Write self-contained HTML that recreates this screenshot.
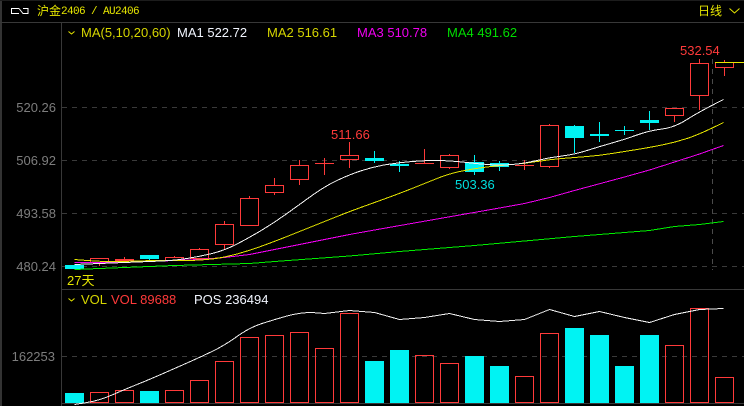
<!DOCTYPE html>
<html><head><meta charset="utf-8"><style>
html,body{margin:0;padding:0;background:#000;width:744px;height:406px;overflow:hidden}
svg{display:block;position:absolute;left:0;top:0}
text{font-family:"Liberation Sans","Noto Sans CJK SC",sans-serif;font-size:13px}
.c{font-family:"Liberation Mono","Noto Sans CJK SC",monospace;font-size:11px;letter-spacing:-0.6px;fill:#e6e600}
.a{fill:#7d7d7d}
</style></head><body>
<svg width="744" height="406" viewBox="0 0 744 406" xmlns="http://www.w3.org/2000/svg">
<rect width="744" height="406" fill="#000"/>
<g shape-rendering="crispEdges">
<rect x="0" y="0" width="2" height="406" fill="#333"/>
<rect x="0" y="0" width="744" height="1" fill="#1c1c1c"/>
<path d="M0 22.5H744M61.5 23V406M62 289.5H744M62 403.5H744" stroke="#383838" fill="none"/>
<path d="M62 107.5H744M62 160.5H744M62 213.5H744M62 266.5H744M62 356.5H744" stroke="#3a3a3a" stroke-dasharray="5 5" fill="none"/>
<path d="M712.5 59V270" stroke="#4a4a4a" stroke-dasharray="5 5" fill="none"/>
</g>

<g shape-rendering="crispEdges" fill="#00f3f3">
<rect x="65" y="393" width="19" height="10"/><rect x="140" y="391" width="19" height="12"/>
<rect x="365" y="361" width="19" height="42"/><rect x="390" y="350" width="19" height="53"/>
<rect x="465" y="356" width="19" height="47"/><rect x="490" y="366" width="19" height="37"/>
<rect x="565" y="328" width="19" height="75"/><rect x="590" y="335" width="19" height="68"/>
<rect x="615" y="366" width="19" height="37"/><rect x="640" y="335" width="19" height="68"/>
</g>
<g shape-rendering="crispEdges" fill="none" stroke="#ff3a3a">
<rect x="90.5" y="392.5" width="18" height="10"/>
<rect x="115.5" y="390.5" width="18" height="12"/>
<rect x="165.5" y="390.5" width="18" height="12"/>
<rect x="190.5" y="380.5" width="18" height="22"/>
<rect x="215.5" y="361.5" width="18" height="41"/>
<rect x="240.5" y="337.5" width="18" height="65"/>
<rect x="265.5" y="335.5" width="18" height="67"/>
<rect x="290.5" y="332.5" width="18" height="70"/>
<rect x="315.5" y="348.5" width="18" height="54"/>
<rect x="340.5" y="313.5" width="18" height="89"/>
<rect x="415.5" y="355.5" width="18" height="47"/>
<rect x="440.5" y="363.5" width="18" height="39"/>
<rect x="515.5" y="376.5" width="18" height="26"/>
<rect x="540.5" y="333.5" width="18" height="69"/>
<rect x="665.5" y="345.5" width="18" height="57"/>
<rect x="690.5" y="308.5" width="18" height="94"/>
<rect x="715.5" y="377.5" width="18" height="25"/>
</g>
<path shape-rendering="crispEdges" fill="none" stroke="#f0f0f0" d="M74.5 404.5L87 402.5Q99.5 400.5 112 395Q124.5 389.5 137 384.5Q149.5 379.5 162 374Q174.5 368.5 187 363Q199.5 357.5 212 351.5Q224.5 345.5 237 336.5Q249.5 327.5 262 323.5Q274.5 319.5 287 316Q299.5 312.5 312 312.5L324.5 313.5L349.5 310.5L374.5 312.5L399.5 319.5L424.5 317.5L449.5 313.5L474.5 319.5L499.5 321.5L524.5 319.5L549.5 309.5L574.5 316.5L599.5 311.5L624.5 317.5L649.5 322.5L674.5 314.5L699.5 309.5L723.5 308.5"/>

<g shape-rendering="crispEdges" fill="none" stroke="#ff3a3a">
<path d="M99.5 258V266M124.5 257V262M174.5 256V260M199.5 248V258M224.5 221V250M249.5 196V226M274.5 178V195M299.5 160V185M324.5 158V175M349.5 142V168M424.5 149V164M449.5 154V169M524.5 160V170M549.5 124V168M699.5 59V110M724.5 60V76"/>
<rect x="90.5" y="258.5" width="18" height="4" fill="#000"/>
<rect x="115.5" y="259.5" width="18" height="1" fill="#000"/>
<rect x="165.5" y="257.5" width="18" height="3" fill="#000"/>
<rect x="190.5" y="249.5" width="18" height="9" fill="#000"/>
<rect x="215.5" y="224.5" width="18" height="20" fill="#000"/>
<rect x="240.5" y="198.5" width="18" height="27" fill="#000"/>
<rect x="265.5" y="185.5" width="18" height="7" fill="#000"/>
<rect x="290.5" y="165.5" width="18" height="14" fill="#000"/>
<path d="M315 163.5H334M415 163.5H434M515 165.5H534"/>
<rect x="340.5" y="155.5" width="18" height="4" fill="#000"/>
<rect x="440.5" y="155.5" width="18" height="12" fill="#000"/>
<rect x="540.5" y="125.5" width="18" height="41" fill="#000"/>
<rect x="665.5" y="108.5" width="18" height="7" fill="#000"/>
<path d="M674.5 116V122"/>
<rect x="690.5" y="63.5" width="18" height="32" fill="#000"/>
<rect x="715.5" y="62.5" width="18" height="5" fill="#000"/>
</g>
<g shape-rendering="crispEdges">
<path d="M149.5 259V261M374.5 151V163M399.5 161V172M474.5 155V175M499.5 161V171M574.5 125V153M599.5 122V142M624.5 126V135M649.5 111V130" stroke="#00f3f3" fill="none"/>
<g fill="#00f3f3">
<rect x="65" y="265" width="19" height="4"/>
<rect x="140" y="255" width="19" height="4"/>
<rect x="365" y="158" width="19" height="3"/>
<rect x="390" y="164" width="19" height="2"/>
<rect x="465" y="162" width="19" height="10"/>
<rect x="490" y="163" width="19" height="4"/>
<rect x="565" y="126" width="19" height="12"/>
<rect x="590" y="134" width="19" height="2"/>
<rect x="615" y="130" width="19" height="1"/>
<rect x="640" y="120" width="19" height="3"/>
</g>
</g>

<g shape-rendering="crispEdges" fill="none">
<polyline stroke="#00ee00" points="74.5,269.5 124.5,267.5 174.5,265.5 249.5,263.5 274.5,261.5 349.5,256 399.5,251.5 474.5,245.5 574.5,236.5 649.5,230.5 674.5,226.5 699.5,224.5 723.5,221.5"/>
<polyline stroke="#f000f0" points="74.5,262.5 124.5,262.5 149.5,261.5 174.5,260.5 199.5,259.5 224.5,257.5 249.5,254.5 274.5,249.5 349.5,234.5 374.5,230 499.5,208 524.5,203.5 549.5,197.5 574.5,190.5 624.5,177 649.5,170 674.5,162 699.5,154 723.5,145.5"/>
<path stroke="#e6e600" d="M74.5 259.5L87 260.5Q99.5 261.5 112 261.5Q124.5 261.5 137 261Q149.5 260.5 162 260.5Q174.5 260.5 187 260.5Q199.5 260.5 212 259Q224.5 257.5 237 254Q249.5 250.5 262 246Q274.5 241.5 287 236.5Q299.5 231.5 312 226.5Q324.5 221.5 337 216.5Q349.5 211.5 362 207Q374.5 202.5 387 198Q399.5 193.5 412 188.5Q424.5 183.5 437 178.5Q449.5 173.5 462 171Q474.5 168.5 487 167Q499.5 165.5 512 164.5Q524.5 163.5 537 161.5Q549.5 159.5 562 158.5Q574.5 157.5 587 156.5Q599.5 155.5 612 153.5Q624.5 151.5 637 149.5Q649.5 147.5 662 145Q674.5 142.5 687 138.5Q699.5 134.5 723.5 122.5"/>
<path stroke="#f4f4f4" d="M74.5 264.5L87 264Q99.5 263.5 112 263Q124.5 262.5 137 262Q149.5 261.5 162 261Q174.5 260.5 187 258.5Q199.5 256.5 212 253.5Q224.5 250.5 237 244Q249.5 237.5 262 230Q274.5 222.5 287 213.5Q299.5 204.5 312 195.5Q324.5 186.5 337 180.5Q349.5 174.5 362 170.5Q374.5 166.5 387 164.5Q399.5 162.5 412 161.5Q424.5 160.5 437 160.5Q449.5 160.5 462 162Q474.5 163.5 487 164.5Q499.5 165.5 512 164.5Q524.5 163.5 537 160.5Q549.5 157.5 562 156Q574.5 154.5 587 150.5Q599.5 146.5 612 143Q624.5 139.5 637 135Q649.5 130.5 662 129Q674.5 127.5 687 119.5Q699.5 111.5 723.5 99.5"/>
<path d="M715 62.5H744" stroke="#e6e600"/>
</g>

<path d="M19 8.5H11.5V13.5H19M19 8.5L23 13.5H28V8.5H23" fill="none" stroke="#fff" stroke-width="1"/>
<path d="M68.5 31.5L71.5 34L74.5 31.5M68.5 298.5L71.5 301L74.5 298.5" fill="none" stroke="#e6e600" stroke-width="1"/>
<path d="M729.5 8.5L734.5 13L739.5 8.5" fill="none" stroke="#e6e600" stroke-width="1"/>

<text x="37" y="15" style="font-size:12px;fill:#e6e600">沪金</text>
<text class="c" x="61" y="14">2406</text>
<text class="c" x="91" y="14">/</text>
<text class="c" x="103" y="14">AU2406</text>
<text x="698" y="15" style="font-size:12px;fill:#e6e600">日线</text>

<text x="81" y="37" fill="#d6d600">MA(5,10,20,60)</text>
<text x="177" y="37" fill="#f2f6ff">MA1 522.72</text>
<text x="267" y="37" fill="#d6d600">MA2 516.61</text>
<text x="357" y="37" fill="#f000f0">MA3 510.78</text>
<text x="447" y="37" fill="#00dd00">MA4 491.62</text>

<text class="a" x="56" y="112" text-anchor="end">520.26</text>
<text class="a" x="56" y="165" text-anchor="end">506.92</text>
<text class="a" x="56" y="218" text-anchor="end">493.58</text>
<text class="a" x="56" y="271" text-anchor="end">480.24</text>
<text class="a" x="55" y="361" text-anchor="end">162253</text>

<text x="331" y="139" fill="#ff3a3a">511.66</text>
<text x="680" y="55" fill="#ff3a3a">532.54</text>
<text x="455" y="189" fill="#00dede">503.36</text>

<text x="67" y="285" fill="#e6e600">27天</text>
<text x="81" y="304" fill="#d6d600">VOL</text>
<text x="111" y="304" fill="#ff3a3a">VOL 89688</text>
<text x="194" y="304" fill="#f2f6ff">POS 236494</text>
</svg>
</body></html>
